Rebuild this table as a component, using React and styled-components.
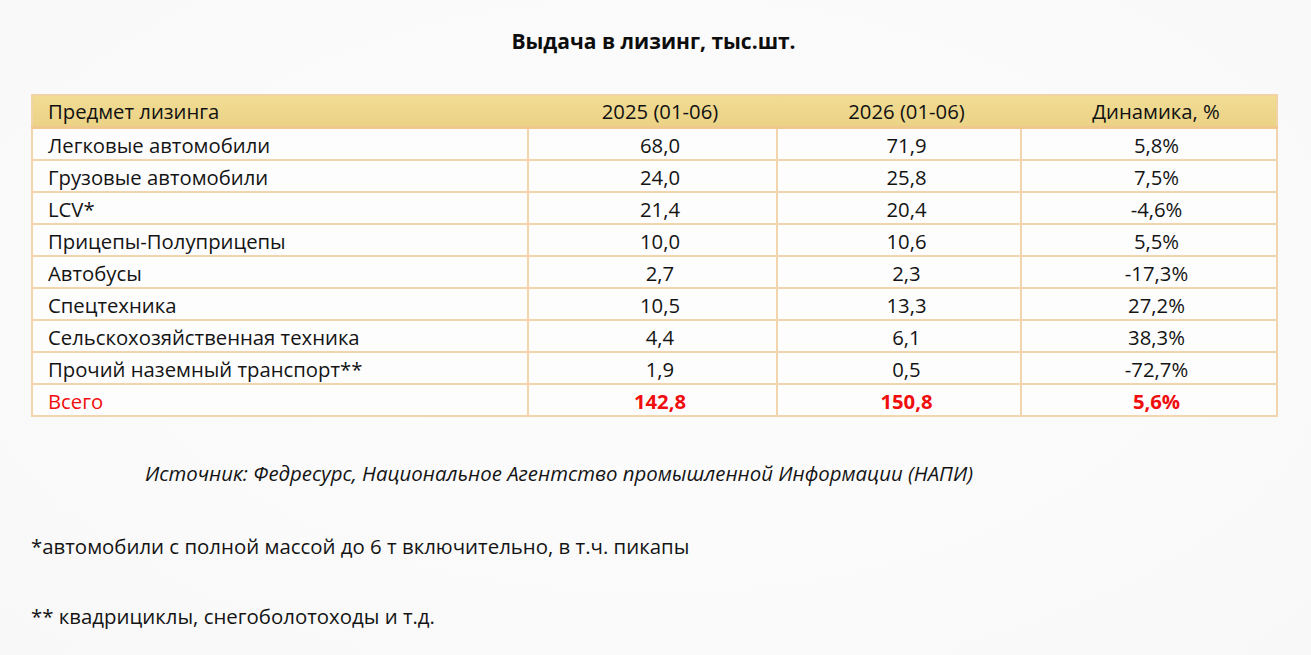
import styled, { createGlobalStyle } from "styled-components";

const rows = [
    ["Легковые автомобили", "68,0", "71,9", "5,8%"],
    ["Грузовые автомобили", "24,0", "25,8", "7,5%"],
    ["LCV*", "21,4", "20,4", "-4,6%"],
    ["Прицепы-Полуприцепы", "10,0", "10,6", "5,5%"],
    ["Автобусы", "2,7", "2,3", "-17,3%"],
    ["Спецтехника", "10,5", "13,3", "27,2%"],
    ["Сельскохозяйственная техника", "4,4", "6,1", "38,3%"],
    ["Прочий наземный транспорт**", "1,9", "0,5", "-72,7%"],
];

const GlobalStyle = createGlobalStyle`
    body{
        margin: 0;
        background: #fafafa;
        font-family: "Open Sans", "Noto Sans", sans-serif;
        color: #111;
    }
`;

export default function App(){
    return(
    <>
        <GlobalStyle />
        <Page>
            <Title>Выдача в лизинг, тыс.шт.</Title>
            <Table>
                <colgroup>
                    <col style={{ width: 496 }} />
                    <col style={{ width: 249 }} />
                    <col style={{ width: 244 }} />
                    <col style={{ width: 256 }} />
                </colgroup>
                <thead>
                    <tr>
                        <HeadCell>Предмет лизинга</HeadCell>
                        <HeadCell center>2025 (01-06)</HeadCell>
                        <HeadCell center>2026 (01-06)</HeadCell>
                        <HeadCell center>Динамика, %</HeadCell>
                    </tr>
                </thead>
                <tbody>
                    {rows.map((r) => (
                        <tr key={r[0]}>
                            <Cell>{r[0]}</Cell>
                            <Cell center>{r[1]}</Cell>
                            <Cell center>{r[2]}</Cell>
                            <Cell center>{r[3]}</Cell>
                        </tr>
                    ))}
                    <tr>
                        <Cell total>Всего</Cell>
                        <Cell center total bold>142,8</Cell>
                        <Cell center total bold>150,8</Cell>
                        <Cell center total bold>5,6%</Cell>
                    </tr>
                </tbody>
            </Table>
            <Source>Источник: Федресурс, Национальное Агентство промышленной Информации (НАПИ)</Source>
            <Note>*автомобили с полной массой до 6 т включительно, в т.ч. пикапы</Note>
            <Note second>** квадрициклы, снегоболотоходы и т.д.</Note>
        </Page>
    </>
    );
}

const Page = styled.div`
    width: 1311px;
    height: 655px;
    padding: 26px 35px 0 31px;
    box-sizing: border-box;
    display: flex;
    flex-direction: column;
    background: radial-gradient(ellipse at 50% 45%, #fdfdfd 0%, #f8f8f8 100%);
`;

const Title = styled.h1`
    margin: 0 0 38px 0;
    text-align: center;
    font-size: 21px;
    font-weight: 700;
    line-height: 30px;
    color: #0d0d0d;
`;

const Table = styled.table`
    width: 1245px;
    border-collapse: collapse;
    table-layout: fixed;
    border: 2px solid #f1d3a6;
    font-size: 20.3px;
`;

const HeadCell = styled.th`
    height: 29px;
    padding: 1px 0 0 15px;
    text-align: ${(p) => (p.center ? "center" : "left")};
    font-weight: 400;
    background: linear-gradient(#f1dc94, #ebd386);
    border-bottom: 3px solid #f0c88e;
    line-height: 1;
`;

const Cell = styled.td`
    height: 28px;
    padding: 2px 0 0 15px;
    text-align: ${(p) => (p.center ? "center" : "left")};
    border: 2px solid #f1d6ad;
    background: #fdfdfd;
    color: ${(p) => (p.total ? "#f00d0d" : "#141414")};
    font-weight: ${(p) => (p.bold ? 700 : 400)};
    line-height: 1;
`;

const Source = styled.p`
    margin: 42px 0 0 114px;
    font-size: 20.4px;
    line-height: 28px;
    font-style: italic;
    color: #141414;
`;

const Note = styled.p`
    margin: ${(p) => (p.second ? "42px" : "45px")} 0 0 0;
    font-size: 20.4px;
    line-height: 28px;
    color: #141414;
`;
